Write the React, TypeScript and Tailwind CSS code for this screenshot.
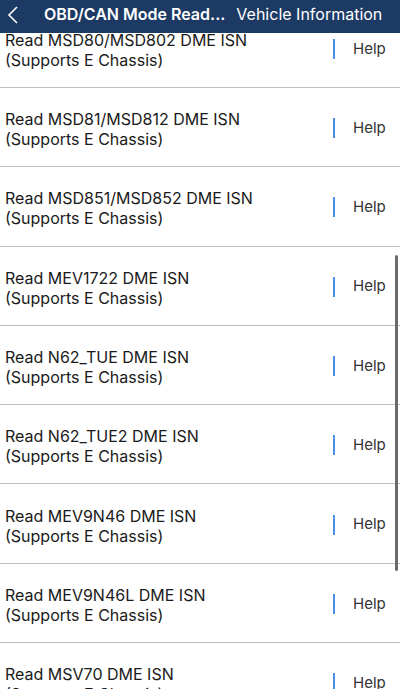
const items = [
  'Read MSD80/MSD802 DME ISN',
  'Read MSD81/MSD812 DME ISN',
  'Read MSD851/MSD852 DME ISN',
  'Read MEV1722 DME ISN',
  'Read N62_TUE DME ISN',
  'Read N62_TUE2 DME ISN',
  'Read MEV9N46 DME ISN',
  'Read MEV9N46L DME ISN',
  'Read MSV70 DME ISN',
];

function Row({ title }: { title: string }) {
  return (
    <div className="flex h-[79.3px] shrink-0 items-center border-b border-[#bdbdc1] bg-white">
      <div className="flex-1 pl-[5px] pt-[4px] text-[16px] leading-[20px] text-[#1a1a1a]">
        <div>{title}</div>
        <div>(Supports E Chassis)</div>
      </div>
      <div className="mt-[2px] h-[20px] w-[2px] bg-[#4d8fe3]" />
      <div className="mt-[2px] w-[65px] pl-[18px] text-[15px] text-[#333]">Help</div>
    </div>
  );
}

export default function App() {
  return (
    <div
      className="flex h-[689px] w-[400px] flex-col overflow-hidden bg-white"
      style={{ fontFamily: 'Inter, "Noto Sans", sans-serif' }}
    >
      {/* Nav bar */}
      <div className="relative z-10 flex h-[33px] shrink-0 items-center bg-[#1c3a64] text-white">
        <svg width="12" height="18" viewBox="0 0 12 18" className="mb-[3px] ml-[7px]">
          <path d="M10 1 L2 9 L10 17" fill="none" stroke="white" strokeWidth="1.6" />
        </svg>
        <span className="mb-[6px] ml-[25px] text-[16px] font-semibold">OBD/CAN Mode Read...</span>
        <span className="mb-[6px] ml-[11px] text-[16px]">Vehicle Information</span>
      </div>

      {/* List */}
      <div className="relative flex-1 overflow-hidden">
        <div className="-mt-[24.3px] flex flex-col">
          {items.map((t) => (
            <Row key={t} title={t} />
          ))}
        </div>
        <div className="absolute left-[395px] top-[222px] h-[316px] w-[3px] rounded-full bg-[#6b6b70]" />
      </div>
    </div>
  );
}
